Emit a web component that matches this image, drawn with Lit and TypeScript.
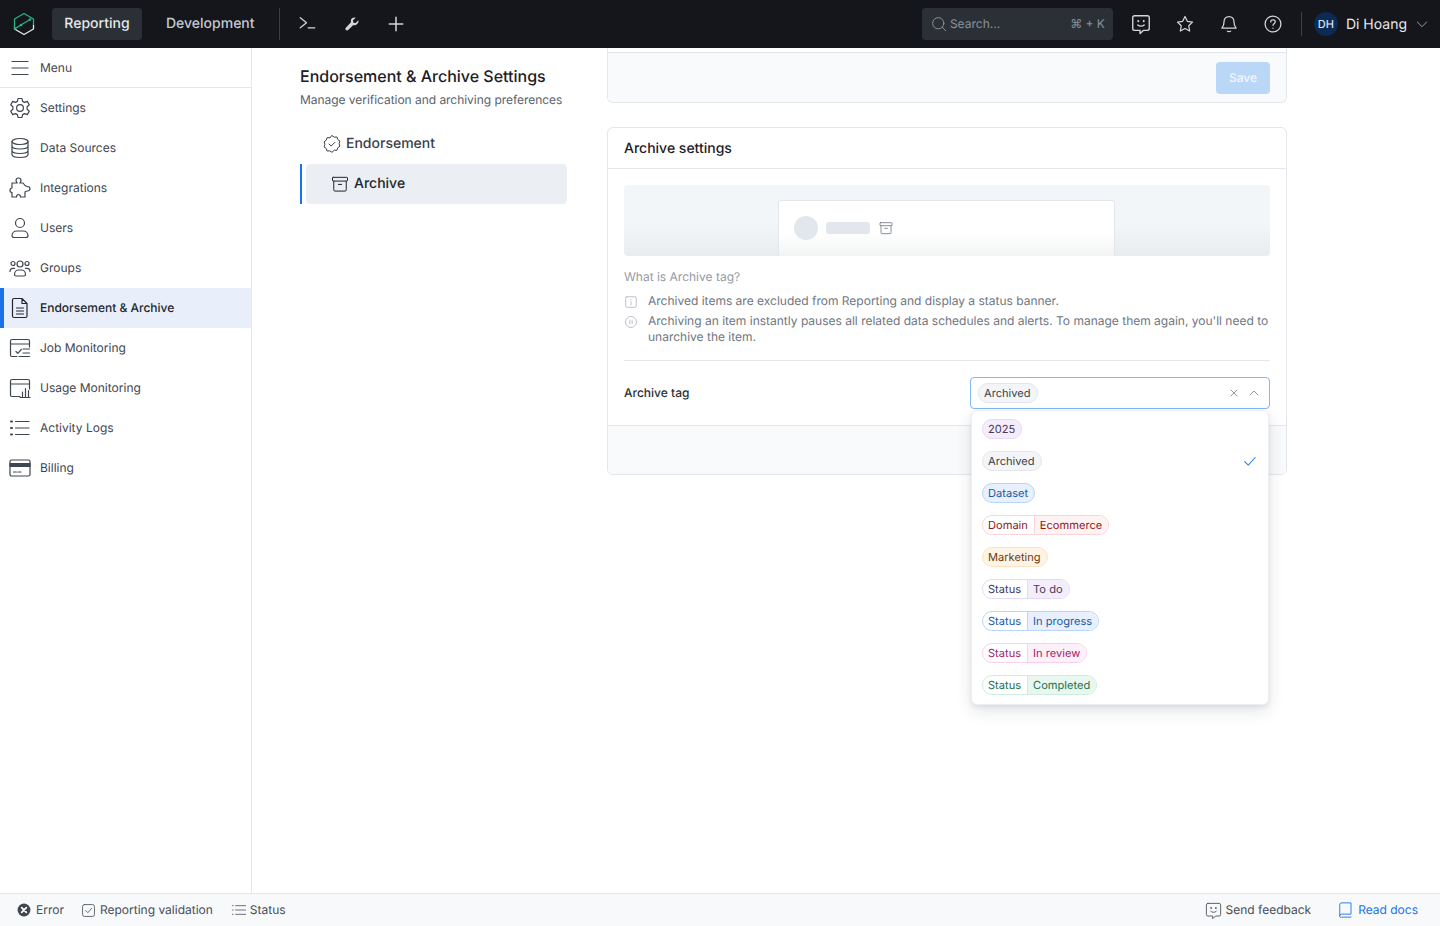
import { LitElement, html, css, svg } from "lit";
import { customElement } from "lit/decorators.js";

const ic = (size: number, body: any, sw = 1.5) =>
  html`<svg width=${size} height=${size} viewBox="0 0 24 24" fill="none" stroke="currentColor" stroke-width=${sw} stroke-linecap="round" stroke-linejoin="round">${body}</svg>`;

const archiveIcon = svg`<rect x="3" y="4" width="18" height="4.5" rx=".8"/><path d="M4.500 8.500V19a1.500 1.500 0 0 0 1.500 1.500h12a1.500 1.500 0 0 0 1.500-1.500V8.500M10 12.500h4"/>`;
const sideIcons: Record<string, any> = {
  settings: svg`<circle cx="12" cy="12" r="3.400"/><path d="M10 2.500h4l.6 2.900 1.900 1 2.800-1 2 3.400-2.200 2v2.400l2.200 2-2 3.400-2.800-1-1.900 1-.6 2.900h-4l-.6-2.900-1.900-1-2.800 1-2-3.400 2.200-2v-2.400l-2.200-2 2-3.400 2.800 1 1.900-1z"/>`,
  data: svg`<ellipse cx="12" cy="5.500" rx="8" ry="3"/><path d="M4 5.500v13c0 1.700 3.600 3 8 3s8-1.300 8-3v-13M4 10c0 1.700 3.600 3 8 3s8-1.300 8-3M4 14.500c0 1.700 3.600 3 8 3s8-1.300 8-3"/>`,
  puzzle: svg`<path d="M9 7h3.200c-.8-1-1.200-1.800-1.200-2.700C11 3 12.200 2 13.500 2S16 3 16 4.300c0 .9-.4 1.700-1.200 2.700H20v5c1 0 2 1 2 2.300s-1 2.200-2 2.200V21h-4.500c0-1.500-.8-2.500-2-2.500s-2 1-2 2.500H7v-5c-1-.8-1.700-1-2.500-1C3 15 2 14 2 12.800s1-2.300 2.500-2.300c.8 0 1.500-.2 2.500-1z" transform="matrix(-1 0 0 1 24 0)"/>`,
  user: svg`<circle cx="12" cy="7" r="4.500"/><path d="M4 19.500c0-3 2.500-4.500 5-4.500h6c2.500 0 5 1.500 5 4.500 0 1.300-1 2-2 2H6c-1 0-2-.7-2-2z"/>`,
  groups: svg`<circle cx="12" cy="8" r="3"/><circle cx="5" cy="7.500" r="2"/><circle cx="19" cy="7.500" r="2"/><path d="M6.500 18.500c0-3 2.200-4.500 4-4.500h3c1.800 0 4 1.500 4 4.500 0 .8-.6 1.500-1.500 1.500H8c-.9 0-1.500-.7-1.500-1.500zM2 15.500c0-2 1.500-3.200 3-3.200h1.500M22 15.500c0-2-1.500-3.200-3-3.200h-1.500"/>`,
  doc: svg`<path d="M6 2.500h8l5 5V20a1.500 1.500 0 0 1-1.500 1.500H6A1.500 1.500 0 0 1 4.500 20V4A1.500 1.500 0 0 1 6 2.500zM14 2.500V7.500h5M8.500 12h7M8.500 15h7M8.500 18h7"/>`,
  job: svg`<path d="M21.500 11V5a1.500 1.500 0 0 0-1.500-1.500H4A1.500 1.500 0 0 0 2.500 5v14A1.500 1.500 0 0 0 4 20.500h5M2.500 8h19M8 15.500l1.800 1.800 3.500-3.800M15 13h6.500M15 17h6.500M11 20.500h10.500"/>`,
  usage: svg`<path d="M21.500 13V5a1.500 1.500 0 0 0-1.500-1.500H4A1.500 1.500 0 0 0 2.500 5v14A1.500 1.500 0 0 0 4 20.500h8M2.500 8h19M14.500 21v-5M17.500 21v-8.500M20.500 21v-6.500M12 21.500h10"/>`,
  list: svg`<path d="M7.500 5.500h13.500M7.500 12h13.500M7.500 18.500h13.500"/><path d="M3 5.500h1M3 12h1M3 18.500h1" stroke-width="2"/>`,
  billing: svg`<rect x="2" y="4" width="20" height="16" rx="1.500"/><path d="M2 7.500h20v3H2z" fill="currentColor"/><path d="M5.500 16h3M10 16h3"/>`,
};
const sideItems = [
  ["Settings", "settings"], ["Data Sources", "data"], ["Integrations", "puzzle"], ["Users", "user"], ["Groups", "groups"],
  ["Endorsement & Archive", "doc"], ["Job Monitoring", "job"], ["Usage Monitoring", "usage"], ["Activity Logs", "list"], ["Billing", "billing"],
];
const feedbackIcon = svg`<path d="M5 3h14a2 2 0 0 1 2 2v12a2 2 0 0 1-2 2h-4.500L11 22.500V19H5a2 2 0 0 1-2-2V5a2 2 0 0 1 2-2z"/><path d="M8.500 13c1.800 1.800 5.200 1.800 7 0"/><path d="M9 8.500v.5M15 8.500v.5" stroke-width="2"/>`;

type Tag = { c: string; a: string; b?: string; sel?: boolean };
const tags: Tag[] = [
  { c: "purple", a: "2025" }, { c: "gray", a: "Archived", sel: true }, { c: "blue", a: "Dataset" },
  { c: "red", a: "Domain", b: "Ecommerce" }, { c: "orange", a: "Marketing" },
  { c: "purple", a: "Status", b: "To do" }, { c: "blue", a: "Status", b: "In progress" },
  { c: "pink", a: "Status", b: "In review" }, { c: "green", a: "Status", b: "Completed" },
];

@customElement("app-root")
export class AppRoot extends LitElement {
  static styles = css`
    :host { display: flex; flex-direction: column; height: 926px; overflow: hidden; font-family: Inter, "Liberation Sans", sans-serif; color: #22262c; background: #fff; font-size: 12px; text-rendering: geometricPrecision; }
    * { box-sizing: border-box; }
    svg { display: block; flex: none; }
    .top { height: 48px; flex: none; background: #14161b; display: flex; align-items: center; color: #c9ced6; }
    .logo { margin-left: 12px; width: 24px; }
    .tab { height: 32px; display: flex; align-items: center; font-size: 14px; font-weight: 500; border-radius: 4px; color: #c5c9d0; padding-bottom: 2px; }
    .tab.on { margin-left: 16px; width: 90px; justify-content: center; background: #2b3037; color: #e6e8ec; }
    .tab.dev { margin-left: 24px; }
    .vsep { width: 1px; height: 32px; background: #3a3f47; margin-left: 24px; }
    .t-ic { display: flex; align-items: center; justify-content: center; color: #d3d6db; }
    .t1 { margin-left: 19px; } .t2 { margin-left: 25px; } .t3 { margin-left: 27px; }
    .search { margin-left: auto; width: 191px; height: 32px; background: #2b3037; border-radius: 4px; display: flex; align-items: center; padding: 0 8px; gap: 2px; color: #8a919b; font-size: 12px; }
    .search span { margin-bottom: 2px; }
    .search span:last-child { margin-left: auto; }
    .icons { display: flex; margin-left: 16px; gap: 20px; color: #d3d6db; align-items: center; }
    .ibox { width: 24px; height: 24px; display: flex; align-items: center; justify-content: center; }
    .vsep2 { width: 1px; height: 24px; background: #3a3f47; margin-left: 16px; }
    .avatar { width: 24px; height: 24px; border-radius: 50%; background: #0b2b54; color: #d7e4f5; font-size: 11px; display: flex; align-items: center; justify-content: center; margin-left: 12px; font-weight: 500; }
    .uname { margin-left: 8px; font-size: 14px; color: #e6e8ec; }
    .chev { margin-left: 7px; margin-right: 10px; color: #b8bdc5; }
    .mid { flex: 1; display: flex; min-height: 0; }
    .side { width: 252px; flex: none; border-right: 1px solid #e6e8ec; color: #3f4650; }
    .s-row { height: 40px; display: flex; align-items: center; gap: 8px; padding-left: 8px; }
    .s-row span { margin-bottom: 2px; }
    .s-row.menu { border-bottom: 1px solid #e3e6ea; }
    .s-row.menu span { margin-bottom: 0; }
    .s-row.on { background: #e8effb; color: #22262c; font-weight: 500; border-left: 4px solid #1a73e8; padding-left: 4px; }
    .content { flex: 1; display: flex; padding-left: 48px; min-width: 0; }
    .left { width: 267px; flex: none; padding-top: 18px; }
    h1 { margin: 0; font-size: 16px; line-height: 20px; font-weight: 500; color: #1c2025; }
    .sub { margin-top: 4px; font-size: 12px; line-height: 20px; color: #5b626d; white-space: nowrap; letter-spacing: -.04px; }
    .nav { margin-top: 14px; }
    .n-row { height: 40px; display: flex; align-items: center; gap: 4px; padding-left: 22px; font-size: 14px; font-weight: 500; color: #3a404a; }
    .n-row span { margin-bottom: 2px; }
    .n-row.on { border-left: 2px solid #1a73e8; padding-left: 4px; }
    .n-box { flex: 1; height: 40px; display: flex; align-items: center; gap: 4px; padding-left: 24px; background: #ebeef3; border-radius: 4px; color: #22262c; }
    .right { width: 680px; margin-left: 40px; flex: none; }
    .card { border: 1px solid #e3e6ec; border-radius: 6px; }
    .c-top { border-top: none; border-radius: 0 0 6px 6px; height: 55px; }
    .spacer { height: 5px; border-bottom: 1px solid #e3e6ec; }
    .c-foot { background: #f9fafc; display: flex; align-items: center; justify-content: flex-end; padding-right: 16px; height: 49px; border-radius: 0 0 5px 5px; }
    .save { width: 54px; height: 32px; background: #bad7f7; color: #f3f8fe; border-radius: 4px; font-size: 12px; font-weight: 500; display: flex; align-items: center; justify-content: center; }
    .c-arch { margin-top: 24px; }
    .c-head { height: 41px; border-bottom: 1px solid #e3e6ec; padding-left: 16px; display: flex; align-items: center; font-size: 14px; font-weight: 500; color: #1c2025; }
    .c-body { padding: 16px; }
    .banner { height: 71px; border-radius: 4px; background: linear-gradient(#f3f6f9 55%, #e9ecef 100%); display: flex; justify-content: center; overflow: hidden; }
    .mock { width: 337px; margin: 15px 0 0 -2px; height: 56px; background: linear-gradient(#fff 60%, #f2f3f4 100%); border: 1px solid #e3e6ec; border-bottom: none; border-radius: 3px 3px 0 0; display: flex; align-items: center; padding: 0 15px 2px; color: #6d7480; }
    .dot { width: 24px; height: 24px; border-radius: 50%; background: #e2e6ed; }
    .bar { width: 44px; height: 12px; border-radius: 3px; background: #e2e6ed; margin: 0 8px; }
    .what { margin-top: 13px; line-height: 16px; color: #939aa5; font-size: 12px; }
    .why { margin-top: 8px; display: flex; flex-direction: column; gap: 4px; color: #6f7681; font-size: 12px; line-height: 16px; }
    .why div { display: flex; gap: 10px; }
    .why svg { margin-top: 2px; color: #b4bac3; }
    .hr { height: 1px; background: #e3e6ec; margin: 15px 0 16px; }
    .tag-row { display: flex; align-items: center; justify-content: space-between; font-size: 12px; font-weight: 500; color: #2b3037; }
    .tag-row > span { margin-bottom: 2px; }
    .sel-wrap { position: relative; width: 300px; font-weight: 400; }
    .select { height: 32px; border: 1px solid #82b8f3; border-radius: 4px; display: flex; align-items: center; padding: 0 9px 0 7px; background: #fff; color: #6b727d; }
    .select .x { margin-left: auto; }
    .select .up { margin-left: 8px; }
    .drop { position: absolute; z-index: 5; left: 1px; right: 1px; top: 33px; height: 295px; background: #fff; border-radius: 6px; border: 1px solid #eceef2; box-shadow: 0 6px 16px rgba(30,40,60,.12), 0 2px 4px rgba(30,40,60,.08); padding: 2px 0; }
    .opt { height: 32px; padding: 0 11px 0 10px; display: flex; align-items: center; justify-content: space-between; color: #2f80e8; }
    .tag { display: inline-flex; height: 20px; border-radius: 10px; border: 1px solid; font-size: 11.100px; line-height: 18px; overflow: hidden; }
    .tag span { padding: 0 6px 0 5px; }
    .tag .b { border-left: 1px solid; }
    .purple { border-color: #e5d9f8; color: #453a5c; } .purple .b, .purple.solid { background: #f3edfc; border-color: #e5d9f8; }
    .gray { border-color: #e3e6ec; color: #3a3f47; } .gray.solid { background: #f3f5f8; }
    .blue { border-color: #b9d6f6; color: #1d5a9f; } .blue .b, .blue.solid { background: #e7f0fc; border-color: #b9d6f6; }
    .red { border-color: #fbd5d5; color: #8f1616; } .red .b { background: #fef3f2; border-color: #fbd5d5; }
    .orange { border-color: #fde3c2; color: #6f3a10; } .orange.solid { background: #fef4e6; }
    .pink { border-color: #fbd0ec; color: #a51c6c; } .pink .b { background: #fdf1f9; border-color: #fbd0ec; }
    .green { border-color: #cdeede; color: #22704c; } .green .b { background: #e8f7ef; border-color: #cdeede; }
    .c-bot { height: 49px; background: #f9fafc; border-top: 1px solid #e3e6ec; border-radius: 0 0 5px 5px; }
    .foot { height: 33px; flex: none; border-top: 1px solid #e3e6ec; background: #f8f9fb; display: flex; align-items: center; padding: 0 22px 0 17px; color: #474e58; font-size: 12px; }
    .f-it { display: flex; align-items: center; gap: 5px; }
    .f-it span { margin-bottom: 2px; }
    .f-it + .f-it { margin-left: 17px; }
    .foot .f-rep { gap: 4px; }
    .foot .f-st { gap: 3px; margin-left: 18px; }
    .foot .f-r { margin-left: auto; gap: 3px; }
    .foot .docs { color: #1a73e8; margin-left: 25px; gap: 4px; }
  `;

  tag(t: Tag) {
    return t.b
      ? html`<span class="tag ${t.c}"><span>${t.a}</span><span class="b">${t.b}</span></span>`
      : html`<span class="tag solid ${t.c}"><span>${t.a}</span></span>`;
  }

  render() {
    return html`
      <div class="top">
        <div class="logo">
          <svg width="24" height="24" viewBox="0 0 24 24" fill="none" stroke-width="1.300" stroke-linejoin="round">
            <path d="M2.500 17V7L12 1.500 21.500 7v6" stroke="#27b37f"/>
            <path d="M2.500 17l9.500 5.500 9.500-5.500v-4" stroke="#e8eaee"/>
            <path d="M3 16.500l15-9" stroke="#27b37f"/>
            <circle cx="18" cy="7.500" r="1.300" fill="#27b37f"/><circle cx="9" cy="13" r="1.300" fill="#27b37f"/><circle cx="3" cy="16.500" r="1.300" fill="#27b37f"/>
          </svg>
        </div>
        <div class="tab on">Reporting</div>
        <div class="tab dev">Development</div>
        <div class="vsep"></div>
        <div class="t-ic t1">${ic(20, svg`<path d="M1.500 4.500L9 10.500l-7.500 6M11 16.500h8"/>`)}</div>
        <div class="t-ic t2">${ic(16, svg`<path d="M21.500 6.500l-4 4-3.500-.5-.5-3.500 4-4c-3-1-6 .5-7 3-.5 1.500-.3 2.800 0 3.800L2.800 17.500c-1 1-1 2.500 0 3.500s2.500 1 3.500 0l7.700-7.600c1 .3 2.300.5 3.800 0 2.800-1 4.700-4 3.700-6.900z" fill="currentColor" stroke="none"/>`)}</div>
        <div class="t-ic t3">${ic(18, svg`<path d="M12 3v18M3 12h18"/>`, 2)}</div>
        <div class="search">
          ${ic(18, svg`<circle cx="11" cy="11" r="7.500"/><path d="M16.500 16.500L21 21"/>`, 1.300)}
          <span>Search...</span><span>⌘ + K</span>
        </div>
        <div class="icons">
          <div class="ibox">${ic(22, feedbackIcon)}</div>
          <div class="ibox">${ic(20, svg`<path d="M12 3l2.800 5.800 6.200.9-4.500 4.400 1.100 6.300L12 17.400l-5.600 3 1.100-6.300L3 9.700l6.200-.9z"/>`)}</div>
          <div class="ibox">${ic(20, svg`<path d="M12 3c-3.500 0-6 2.700-6 6.500 0 4.500-1.500 6-2.500 7.500h17c-1-1.500-2.500-3-2.500-7.500C18 5.700 15.500 3 12 3zM10 20.500c1 1 3 1 4 0"/>`)}</div>
          <div class="ibox">${ic(20, svg`<circle cx="12" cy="12" r="9.500"/><path d="M9.300 9.500c0-1.500 1.200-2.500 2.700-2.500s2.700 1 2.700 2.400c0 2.100-2.700 2.300-2.700 4.100M12 17v.2"/>`)}</div>
        </div>
        <div class="vsep2"></div>
        <div class="avatar">DH</div>
        <div class="uname">Di Hoang</div>
        <div class="chev">${ic(16, svg`<path d="M5 9l7 7 7-7"/>`, 1.200)}</div>
      </div>
      <div class="mid">
        <div class="side">
          <div class="s-row menu">${ic(24, svg`<path d="M4 5.500h16M4 12h16M4 18.500h16"/>`, 1.200)}<span>Menu</span></div>
          ${sideItems.map(([l, i]) => html`<div class="s-row ${i === "doc" ? "on" : ""}">${ic(24, sideIcons[i], 1.200)}<span>${l}</span></div>`)}
        </div>
        <div class="content">
          <div class="left">
            <h1>Endorsement &amp; Archive Settings</h1>
            <div class="sub">Manage verification and archiving preferences</div>
            <div class="nav">
              <div class="n-row">${ic(20, svg`<path d="M12 2l2.700 1.800 3.200-.2 1 3 2.600 1.900-1 3.100 1 3.100-2.600 1.900-1 3-3.200-.2L12 22l-2.700-1.800-3.200.2-1-3-2.600-1.900 1-3.100-1-3.100 2.600-1.900 1-3 3.200.2z"/><path d="M8.500 12l2.500 2.500 4.500-4.500"/>`, 1.200)}<span>Endorsement</span></div>
              <div class="n-row on"><div class="n-box">${ic(20, archiveIcon, 1.200)}<span>Archive</span></div></div>
            </div>
          </div>
          <div class="right">
            <div class="card c-top">
              <div class="spacer"></div>
              <div class="c-foot"><div class="save">Save</div></div>
            </div>
            <div class="card c-arch">
              <div class="c-head">Archive settings</div>
              <div class="c-body">
                <div class="banner"><div class="mock"><div class="dot"></div><div class="bar"></div>${ic(16, archiveIcon, 1.200)}</div></div>
                <div class="what">What is Archive tag?</div>
                <div class="why">
                  <div>${ic(14, svg`<rect x="3" y="3" width="18" height="18" rx="2"/><path d="M12 7.500v.5M12 11v6"/>`)}<span>Archived items are excluded from Reporting and display a status banner.</span></div>
                  <div>${ic(14, svg`<circle cx="12" cy="12" r="9.500"/><path d="M10 9v6M14 9v6"/>`)}<span>Archiving an item instantly pauses all related data schedules and alerts. To manage them again, you'll need to unarchive the item.</span></div>
                </div>
                <div class="hr"></div>
                <div class="tag-row">
                  <span>Archive tag</span>
                  <div class="sel-wrap">
                    <div class="select">
                      ${this.tag({ c: "gray", a: "Archived" })}
                      <span class="x">${ic(12, svg`<path d="M6 6l12 12M18 6L6 18"/>`)}</span>
                      <span class="up">${ic(12, svg`<path d="M4 16l8-8 8 8"/>`)}</span>
                    </div>
                    <div class="drop">
                      ${tags.map((t) => html`<div class="opt">${this.tag(t)}${t.sel ? ic(14, svg`<path d="M3 13l6 6L21 6"/>`, 1.800) : ""}</div>`)}
                    </div>
                  </div>
                </div>
              </div>
              <div class="c-bot"></div>
            </div>
          </div>
        </div>
      </div>
      <div class="foot">
        <div class="f-it"><svg width="14" height="14" viewBox="0 0 24 24"><circle cx="12" cy="12" r="11" fill="#3f4650"/><path d="M8 8l8 8M16 8l-8 8" stroke="#fff" stroke-width="3" stroke-linecap="round"/></svg><span>Error</span></div>
        <div class="f-it f-rep">${ic(15, svg`<rect x="2.500" y="2.500" width="19" height="19" rx="3"/><path d="M7.500 12l3.500 3.500 6-7"/>`, 1.300)}<span>Reporting validation</span></div>
        <div class="f-it f-st">${ic(16, svg`<path d="M7 5.500h15M7 12h15M7 18.500h15"/><path d="M2 5.500h1.200M2 12h1.200M2 18.500h1.200"/>`, 1.200)}<span>Status</span></div>
        <div class="f-it f-r">${ic(19, feedbackIcon, 1.100)}<span>Send feedback</span></div>
        <div class="f-it docs">${ic(18, svg`<path d="M5 19.500V5a2.500 2.500 0 0 1 2.500-2.500H20v15H7.500A2.500 2.500 0 0 0 5 20a1.500 1.500 0 0 0 2.500 1.500H20"/>`, 1.200)}<span>Read docs</span></div>
      </div>
    `;
  }
}
